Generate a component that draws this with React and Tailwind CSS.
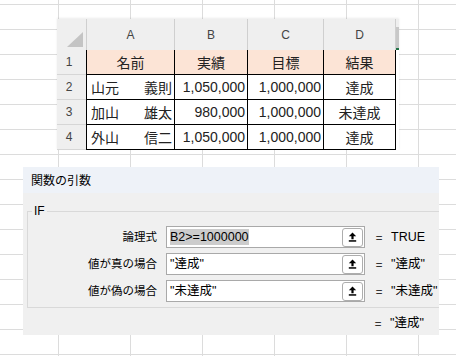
import React from 'react'

const rows = [
  { n: '2', first: '山元', last: '義則', actual: '1,050,000', goal: '1,000,000', result: '達成' },
  { n: '3', first: '加山', last: '雄太', actual: '980,000', goal: '1,000,000', result: '未達成' },
  { n: '4', first: '外山', last: '信二', actual: '1,050,000', goal: '1,000,000', result: '達成' },
]

const args = [
  { label: '論理式', value: 'B2>=1000000', selected: true, res: 'TRUE' },
  { label: '値が真の場合', value: '"達成"', res: '"達成"' },
  { label: '値が偽の場合', value: '"未達成"', res: '"未達成"' },
]

function RefButton() {
  return (
    <div className="ml-auto mr-[1px] flex h-[19px] w-[21px] items-center justify-center rounded-[3px] border border-[#adadad] bg-white">
      <svg width="9" height="10" viewBox="0 0 9 10">
        <path d="M4.5 0.5 L8.2 4.3 H5.6 V7.2 H3.4 V4.3 H0.8 Z" fill="#000" />
        <rect x="0.8" y="8.2" width="7.4" height="1.5" fill="#000" />
      </svg>
    </div>
  )
}

export default function App() {
  return (
    <div className="h-[356px] w-[456px] overflow-hidden bg-white bg-[linear-gradient(to_right,#dcdcdc_1px,transparent_1px),linear-gradient(to_bottom,#dcdcdc_1px,transparent_1px)] bg-size-[72px_25px] bg-position-[58px_4px] pt-[19px] font-['Noto_Sans_CJK_JP',sans-serif]">
      {/* pasted sheet range */}
      <div className="ml-[57px] w-[342px] bg-white text-[#222] shadow-[0_-1px_2px_rgba(0,0,0,0.08)]">
        <div className="flex h-[31px] bg-[#efefef] text-[12px] text-[#444] font-['Liberation_Sans',sans-serif]">
          <div className="flex w-[29px] items-end justify-end pb-[3px] pr-[3px]">
            <svg width="16" height="15" viewBox="0 0 16 15">
              <polygon points="16,0 16,15 0,15" fill="#c4c4c4" />
            </svg>
          </div>
          <div className="flex w-[88px] items-center justify-center border-l border-[#cfcfcf]">A</div>
          <div className="flex w-[73px] items-center justify-center border-l border-[#cfcfcf]">B</div>
          <div className="flex w-[76px] items-center justify-center border-l border-[#cfcfcf]">C</div>
          <div className="flex w-[73px] items-center justify-center border-x border-[#cfcfcf]">D</div>
          <div className="mt-[8px] w-[3px] border-b-2 border-[#217346] bg-[#c8c8c8]" />
        </div>

        <div className="flex h-[25px] text-[14px]">
          <div className="flex w-[29px] items-center justify-center border-b border-[#d6d6d6] bg-[#efefef] pr-[5px] text-[12px] text-[#444] font-['Liberation_Sans',sans-serif]">1</div>
          <div className="flex w-[88px] items-center justify-center border-b border-l border-black bg-[#fce4d6]">名前</div>
          <div className="flex w-[73px] items-center justify-center border-b border-l border-black bg-[#fce4d6]">実績</div>
          <div className="flex w-[76px] items-center justify-center border-b border-l border-black bg-[#fce4d6]">目標</div>
          <div className="flex w-[73px] items-center justify-center border-x border-b border-black bg-[#fce4d6]">結果</div>
        </div>

        {rows.map(r => (
          <div key={r.n} className="flex h-[25px] text-[14px]">
            <div className="flex w-[29px] items-center justify-center border-b border-[#d6d6d6] bg-[#efefef] pr-[5px] text-[12px] text-[#444] font-['Liberation_Sans',sans-serif]">{r.n}</div>
            <div className="flex w-[88px] items-center justify-between border-b border-l border-black pl-[4px] pr-[2px]">
              <span>{r.first}</span>
              <span>{r.last}</span>
            </div>
            <div className="flex w-[73px] items-center justify-end border-b border-l border-black pr-[2px] font-['Liberation_Sans',sans-serif]">{r.actual}</div>
            <div className="flex w-[76px] items-center justify-end border-b border-l border-black pr-[2px] font-['Liberation_Sans',sans-serif]">{r.goal}</div>
            <div className="flex w-[73px] items-center justify-center border-x border-b border-black">{r.result}</div>
          </div>
        ))}
      </div>

      {/* function arguments dialog */}
      <div className="ml-[23px] mt-[17px] h-[168px] w-[416px] overflow-hidden text-[12px] text-black">
        <div className="flex h-[26px] items-center bg-[#eef2f8] pl-[8px]">関数の引数</div>
        <div className="h-[142px] bg-[#f0f0f0] pl-[4px] pt-[11px]">
          <fieldset className="w-[430px] border-y border-l border-[#d9d9d9] pb-[0px] pt-[8px]">
            <legend className="ml-[4px] px-[2px] text-[12px] leading-[14px] font-['Liberation_Sans',sans-serif]">IF</legend>
            {args.map(a => (
              <div key={a.label} className="mb-[5px] flex h-[22px] items-center">
                <div className="w-[129px] text-right text-[11.5px]">{a.label}</div>
                <div className="ml-[9px] flex h-[22px] w-[199px] items-center border border-[#a9a9a9] bg-white pl-[3px] text-[12.5px] font-['Liberation_Sans','Noto_Sans_CJK_JP',sans-serif]">
                  <span className={a.selected ? 'bg-[#cccccc] leading-[16px]' : 'leading-[16px]'}>{a.value}</span>
                  <RefButton />
                </div>
                <div className="ml-[9px] w-[10px] text-center text-[12px]">=</div>
                <div className="ml-[7px] whitespace-nowrap text-[12.5px] font-['Liberation_Sans','Noto_Sans_CJK_JP',sans-serif]">{a.res}</div>
              </div>
            ))}
          </fieldset>
          <div className="mt-[4px] flex h-[22px] items-center">
            <div className="w-[129px]" />
            <div className="ml-[9px] w-[199px]" />
            <div className="ml-[9px] w-[10px] text-center">=</div>
            <div className="ml-[7px] text-[12.5px] leading-[16px] font-['Liberation_Sans','Noto_Sans_CJK_JP',sans-serif]">"達成"</div>
          </div>
        </div>
      </div>
    </div>
  )
}
